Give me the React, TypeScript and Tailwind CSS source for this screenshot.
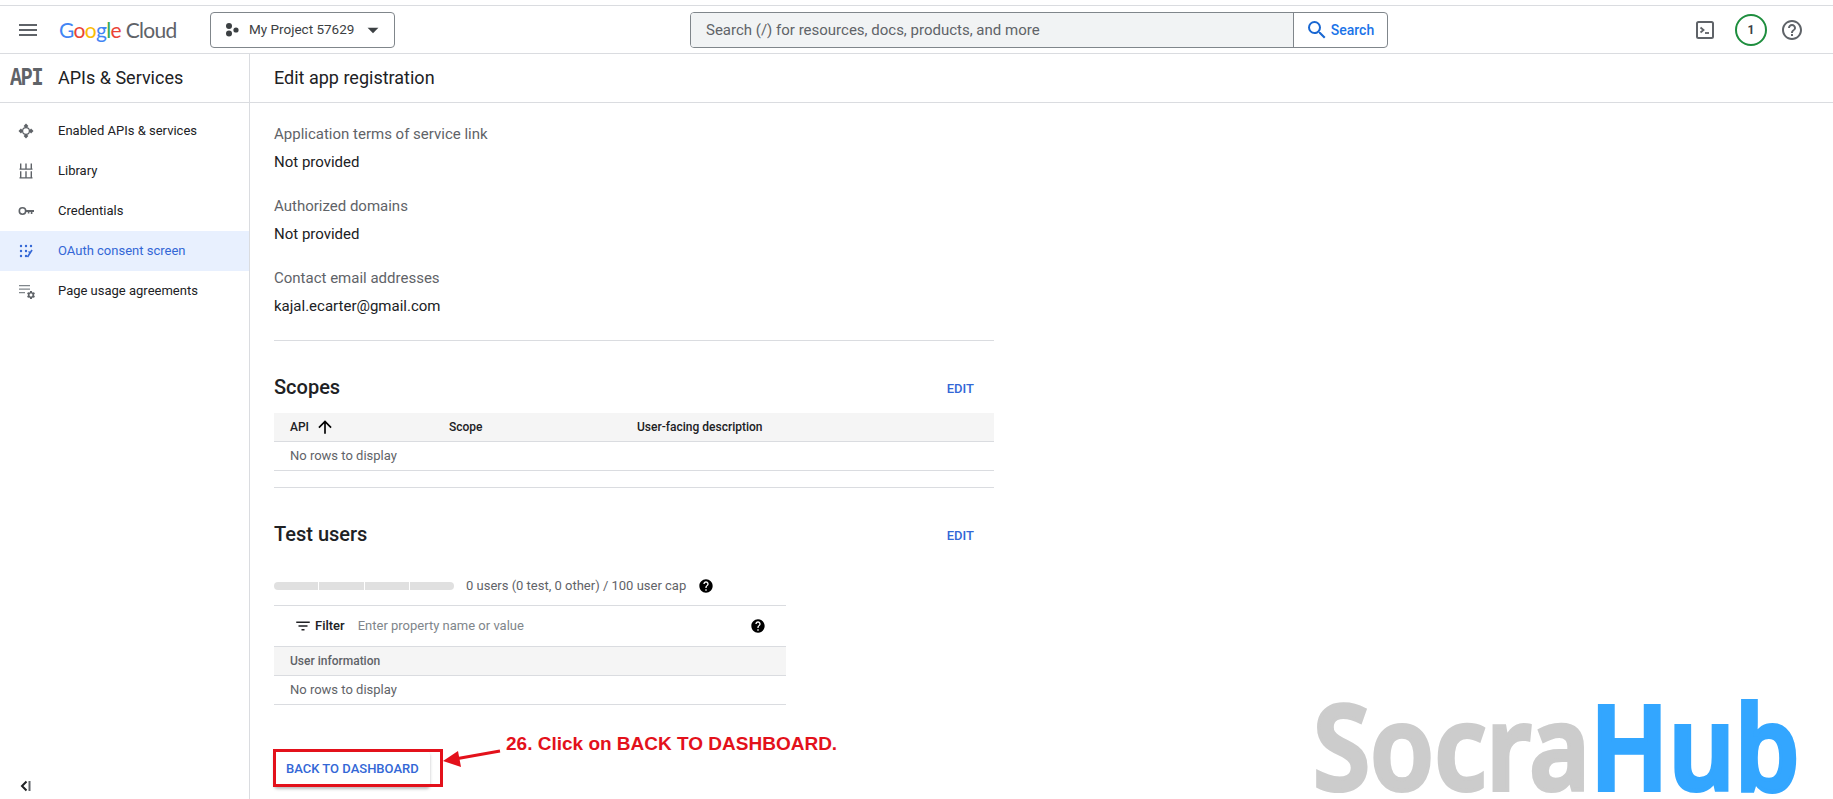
import {
  MdArrowDropDown,
  MdArrowUpward,
  MdFilterList,
  MdHelp,
  MdHelpOutline,
  MdMenu,
  MdSearch,
  MdSettings,
} from "react-icons/md";

const EnabledIcon = () => (
  <svg width="20" height="20" viewBox="0 0 20 20" fill="#5f6368">
    <path d="M10 2.5l2.4 2.4L10 7.3 7.6 4.9zM10 12.7l2.4 2.4-2.4 2.4-2.4-2.4zM2.5 10l2.4-2.4L7.3 10l-2.4 2.4zM12.7 10l2.4-2.4 2.4 2.4-2.4 2.4z" />
    <circle cx="10" cy="10" r="3.4" fill="none" stroke="#5f6368" strokeWidth="1.2" />
  </svg>
);

const LibraryIcon = () => (
  <svg width="20" height="20" viewBox="0 0 20 20" fill="#5f6368">
    <path d="M4 2.5h1.4v5H4zM9.3 2.5h1.4v5H9.3zM14.6 2.5H16v5h-1.4zM3.5 7.6h13v1.2h-13zM4 10.2h1.4v6H4zM9.3 10.2h1.4v6H9.3zM14.6 10.2H16v6h-1.4zM3.5 16.2h13v1.2h-13z" />
  </svg>
);

const KeyIcon = () => (
  <svg width="20" height="20" viewBox="0 0 20 20" fill="#5f6368">
    <circle cx="6.5" cy="10" r="3.2" fill="none" stroke="#5f6368" strokeWidth="1.6" />
    <path d="M9.5 9h8.5v2h-1.6v2h-1.6v-2h-1.4v1.4h-1.6V11H9.5z" />
  </svg>
);

const OauthIcon = () => (
  <svg width="20" height="20" viewBox="0 0 20 20" fill="#3367d6">
    <circle cx="5" cy="5" r="1.2" />
    <circle cx="10" cy="5" r="1.2" />
    <circle cx="15" cy="5" r="1.2" />
    <circle cx="5" cy="10" r="1.2" />
    <circle cx="10" cy="10" r="1.2" />
    <circle cx="5" cy="15" r="1.2" />
    <circle cx="10" cy="15" r="1.2" />
    <path d="M11.5 16l4.5-7" fill="none" stroke="#3367d6" strokeWidth="1.6" />
    <path d="M12.5 10.5l2 1.5" fill="none" stroke="#3367d6" strokeWidth="1.4" />
  </svg>
);

const UsageIcon = () => (
  <div className="relative w-5 h-5">
    <svg width="20" height="20" viewBox="0 0 20 20" fill="#80868b">
      <path d="M3 4h11v1.2H3zM3 7.5h11v1.2H3zM3 11h6v1.2H3z" />
    </svg>
    <MdSettings className="absolute right-0 bottom-[1px] text-[#5f6368]" size={10} />
  </div>
);

const navItems = [
  { label: "Enabled APIs & services", icon: <EnabledIcon /> },
  { label: "Library", icon: <LibraryIcon /> },
  { label: "Credentials", icon: <KeyIcon /> },
  { label: "OAuth consent screen", icon: <OauthIcon />, active: true },
  { label: "Page usage agreements", icon: <UsageIcon /> },
];

function TopBar() {
  return (
    <div className="h-[48px] shrink-0 flex items-center border-b border-[#dadce0] text-[#3c4043]">
      <MdMenu size={24} className="ml-[16px] text-[#5f6368]" />
      <div className="ml-[19px] w-[120px] text-[21px] leading-none tracking-[-0.7px] font-['Lato',sans-serif] whitespace-nowrap">
        <span className="text-[#4285f4]">G</span>
        <span className="text-[#ea4335]">o</span>
        <span className="text-[#fbbc04]">o</span>
        <span className="text-[#4285f4]">g</span>
        <span className="text-[#34a853]">l</span>
        <span className="text-[#ea4335]">e</span>
        <span className="text-[#5f6368] ml-[5px]">Cloud</span>
      </div>
      <button className="ml-[31px] w-[185px] h-[36px] flex items-center border border-[#80868b] rounded-[4px] text-[13.5px] text-[#3c4043]">
        <svg width="16" height="16" viewBox="0 0 16 16" fill="#3c4043" className="ml-[13px]">
          <circle cx="5" cy="4" r="3" />
          <circle cx="5" cy="11.5" r="3" />
          <circle cx="12" cy="8" r="2.6" />
        </svg>
        <span className="ml-[9px] whitespace-nowrap">My Project 57629</span>
        <MdArrowDropDown size={26} className="ml-[6px] text-[#3c4043]" />
      </button>
      <div className="ml-[295px] w-[698px] h-[36px] flex border border-[#80868b] rounded-[4px] overflow-hidden">
        <div className="flex-1 bg-[#f1f3f4] flex items-center pl-[15px] pt-[1px] text-[15px] text-[#5f6368] border-r border-[#80868b]">
          Search (/) for resources, docs, products, and more
        </div>
        <div className="w-[93px] flex items-center justify-center gap-[2px] pr-[2px] text-sm font-medium text-[#1a73e8]">
          <MdSearch size={24} className="text-[#1967d2]" />
          Search
        </div>
      </div>
      <div className="ml-auto flex items-center">
        <svg width="20" height="20" viewBox="0 0 20 20" className="mr-[20px]" fill="none" stroke="#5f6368">
          <rect x="2" y="2" width="16" height="16" rx="1.5" strokeWidth="2" />
          <path d="M5.5 7.5L8.5 10l-3 2.5" strokeWidth="1.8" />
          <path d="M10 13h4" strokeWidth="1.8" />
        </svg>
        <div className="w-8 h-8 rounded-full border-2 border-[#1e8e3e] flex items-center justify-center text-xs font-bold text-[#3c4043]">
          1
        </div>
        <MdHelpOutline size={24} className="ml-[13px] mr-[29px] text-[#5f6368]" />
      </div>
    </div>
  );
}

function Sidebar() {
  return (
    <aside className="w-[250px] shrink-0 border-r border-[#dadce0] flex flex-col">
      <div className="h-[49px] shrink-0 flex items-center border-b border-[#dadce0]">
        <span className="ml-[10px] w-[48px] text-[20px] font-bold font-['Liberation_Mono',monospace] tracking-[-1.2px] text-[#5f6368] scale-y-[1.3]">
          API
        </span>
        <span className="text-lg text-[#202124]">APIs &amp; Services</span>
      </div>
      <nav className="pt-[8px]">
        {navItems.map((item) => (
          <div
            key={item.label}
            className={
              item.active
                ? "h-[40px] flex items-center bg-[#e8f0fe] text-[#3367d6]"
                : "h-[40px] flex items-center text-[#202124]"
            }
          >
            <div className="w-[58px] pl-[16px] shrink-0">{item.icon}</div>
            <span className="text-[13px]">{item.label}</span>
          </div>
        ))}
      </nav>
      <div className="mt-auto h-[20px] pl-[19px]">
        <svg width="14" height="14" viewBox="0 0 14 14" fill="none">
          <path d="M7.5 2.5L3 7l4.5 4.5" stroke="#202124" strokeWidth="2" />
          <path d="M10.5 2v10" stroke="#5f6368" strokeWidth="2" />
        </svg>
      </div>
    </aside>
  );
}

function Field({ label, value }: { label: string; value: string }) {
  return (
    <div className="h-[72px]">
      <div className="text-[15px] leading-[20px] text-[#5f6368]">{label}</div>
      <div className="mt-[8px] text-[15px] leading-[20px] text-[#202124]">{value}</div>
    </div>
  );
}

function SectionHead({ title }: { title: string }) {
  return (
    <div className="flex items-center justify-between h-[32px] pr-[20px]">
      <h2 className="text-xl font-medium text-[#202124]">{title}</h2>
      <span className="mt-1 text-[13px] font-medium text-[#3367d6]">EDIT</span>
    </div>
  );
}

function Main() {
  return (
    <main className="flex-1 min-w-0 flex flex-col">
      <div className="h-[49px] shrink-0 flex items-center border-b border-[#dadce0] pl-6 text-lg text-[#202124]">
        Edit app registration
      </div>
      <div className="pl-6 w-[744px]">
        <div className="pt-[21px] h-[238px] border-b border-[#dadce0]">
          <Field label="Application terms of service link" value="Not provided" />
          <Field label="Authorized domains" value="Not provided" />
          <Field label="Contact email addresses" value="kajal.ecarter@gmail.com" />
        </div>
        <div className="pt-[30px]">
          <SectionHead title="Scopes" />
        </div>
        <div className="mt-[10px] h-[29px] bg-[#f5f5f5] border-b border-[#dadce0] flex items-center text-xs font-medium text-[#202124]">
          <div className="w-[175px] pl-4 flex items-center gap-[6px]">
            API
            <MdArrowUpward size={20} className="text-black" />
          </div>
          <div className="w-[188px]">Scope</div>
          <div>User-facing description</div>
        </div>
        <div className="h-[29px] border-b border-[#dadce0] flex items-center pl-4 text-[13px] text-[#5f6368]">
          No rows to display
        </div>
        <div className="h-[17px] border-b border-[#dadce0]"></div>
        <div className="pt-[30px]">
          <SectionHead title="Test users" />
        </div>
        <div className="mt-[24px] flex items-center h-[24px]">
          <div className="w-[180px] h-[8px] rounded-full overflow-hidden flex gap-px">
            <div className="flex-1 bg-[#e0e0e0]"></div>
            <div className="flex-1 bg-[#e0e0e0]"></div>
            <div className="flex-1 bg-[#e0e0e0]"></div>
            <div className="flex-1 bg-[#e0e0e0]"></div>
          </div>
          <span className="ml-[12px] text-[13px] text-[#5f6368]">0 users (0 test, 0 other) / 100 user cap</span>
          <MdHelp size={16} className="ml-[12px] text-black" />
        </div>
        <div className="mt-[7px] w-[512px]">
          <div className="h-[42px] border-y border-[#dadce0] flex items-center pl-[20px] pr-[20px]">
            <MdFilterList size={18} className="text-[#202124]" />
            <span className="ml-[3px] text-[13px] font-medium text-[#202124]">Filter</span>
            <span className="ml-[13px] text-[13px] text-[#80868b]">Enter property name or value</span>
            <MdHelp size={16} className="ml-auto text-black" />
          </div>
          <div className="h-[29px] bg-[#f5f5f5] border-b border-[#dadce0] flex items-center pl-4 text-xs font-medium text-[#5f6368]">
            User information
          </div>
          <div className="h-[29px] border-b border-[#dadce0] flex items-center pl-4 text-[13px] text-[#5f6368]">
            No rows to display
          </div>
        </div>
        <button className="relative mt-[46px] h-[36px] w-[156px] rounded-[4px] shadow-[0_2px_3px_rgba(60,64,67,0.35)] text-[13px] font-medium text-[#3367d6] text-left pl-[12px]">
          BACK TO DASHBOARD
          <span className="absolute left-[-1px] top-[-2px] w-[170px] h-[38px] border-[3px] border-[#e3111b]"></span>
        </button>
      </div>
    </main>
  );
}

export default function App() {
  return (
    <div className="relative h-[799px] overflow-hidden bg-white font-['Roboto',sans-serif] flex flex-col pt-[5px]">
      <div className="border-t border-[#dadce0]"></div>
      <TopBar />
      <div className="flex flex-1 min-h-0">
        <Sidebar />
        <Main />
      </div>

      {/* annotation on top of the screenshot */}
      <svg width="62" height="30" viewBox="0 0 62 30" className="absolute left-[440px] top-[745px]">
        <path d="M60 6L15 14" stroke="#e3111b" strokeWidth="3" />
        <path d="M3 16l15-10 3 16z" fill="#e3111b" />
      </svg>
      <div className="absolute left-[506px] top-[730px] text-[19px] font-bold text-[#e3111b] font-['Liberation_Sans',sans-serif] whitespace-nowrap">
        26. Click on BACK TO DASHBOARD.
      </div>

      {/* watermark */}
      <div className="absolute left-[1313px] top-[692px] text-[118px] leading-[105px] font-semibold font-['Noto_Sans',sans-serif] whitespace-nowrap origin-left scale-x-[0.88] [-webkit-text-stroke:4px_currentColor] [stroke-linejoin:round]">
        <span className="text-[#cccccc]">Socra</span>
        <span className="text-[#33a6ff]">Hub</span>
      </div>
    </div>
  );
}
